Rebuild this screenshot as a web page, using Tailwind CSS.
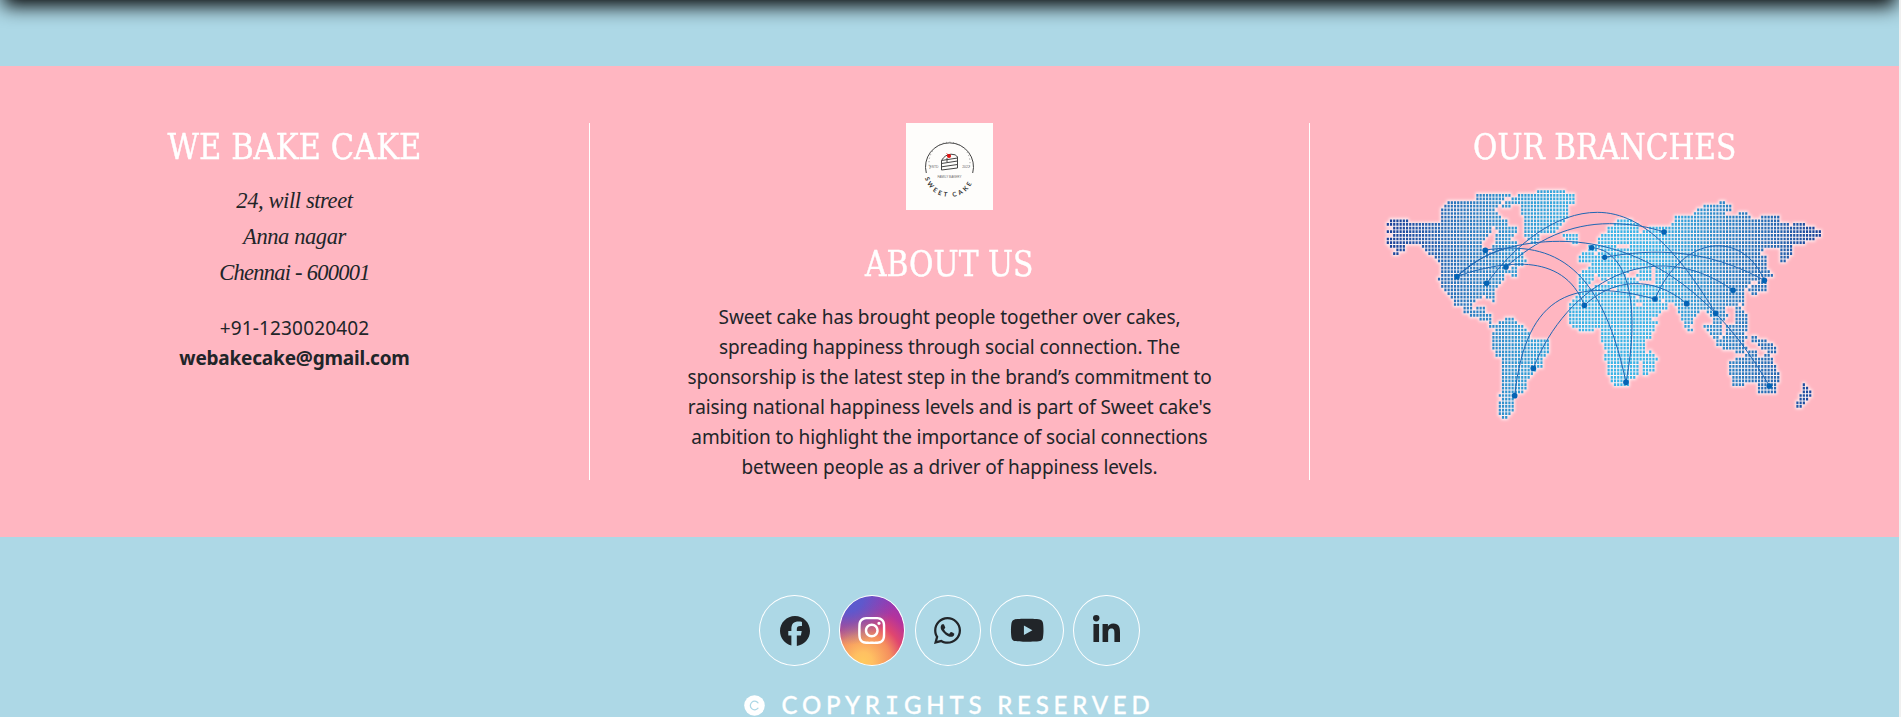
<!DOCTYPE html>
<html lang="en">
<head>
<meta charset="utf-8">
<title>We Bake Cake</title>
<script src="https://cdn.jsdelivr.net/npm/@tailwindcss/browser@4"></script>
</head>
<body class="bg-[#f0f0f0] overflow-hidden">
<div class="w-[1899px] h-[717px] bg-[#add8e6] overflow-hidden flex flex-col text-[#212529] font-['Noto_Sans',sans-serif]">
  <div class="h-[66px] shrink-0 overflow-hidden px-[3px]">
    <div class="h-[100px] -mt-[94px] bg-black blur-[9.5px]"></div>
  </div>

  <footer class="h-[471px] shrink-0 bg-[#ffb6c1] py-[57px] flex text-center">
    <section class="w-[590px] border-r border-white">
      <h2 class="h-[47px] leading-[48px] text-[35.5px] scale-x-[0.958] [-webkit-text-stroke:0.4px_white] text-white whitespace-nowrap font-['DejaVu_Serif_Condensed','DejaVu_Serif',serif] [font-stretch:semi-condensed]">WE BAKE CAKE</h2>
      <address class="mt-[13px] leading-9 text-[22.5px] font-['Liberation_Serif',serif] italic">
        <div class="tracking-[-0.4px]">24, will street</div>
        <div class="tracking-[-0.4px]">Anna nagar</div>
        <div class="tracking-[-0.75px]">Chennai - 600001</div>
      </address>
      <div class="mt-[22px] leading-[30px] text-[19px]">
        <div class="tracking-[0.15px]">+91-1230020402</div>
        <div class="font-bold tracking-[-0.2px]">webakecake@gmail.com</div>
      </div>
    </section>

    <section class="w-[720px] border-r border-white flex flex-col items-center">
      <svg class="w-[87px] h-[87px] shrink-0 bg-[#fefdfb]" viewBox="0 0 87 87">
        <g fill="none" stroke="#444">
          <path d="M20.3 50A24 24 0 1 1 66.700 50" stroke-width="1"/>
          <path d="M24 46A20.500 20.500 0 1 1 63 46" stroke-width=".9" stroke-dasharray=".9 2.6" stroke="#777"/>
          <path d="M35.500 37.500v9.500L51.500 45v-11.500M35.500 37.500L51.500 35M35.500 40.500L51.500 38M35.500 43.800L51.500 41.500M35.500 37.500Q39 31.500 45 31.200Q50 31 51.500 34" stroke-width="1"/>
          <path d="M41 35v4" stroke-width="1"/>
        </g>
        <circle cx="43" cy="33" r="2.100" fill="#e01010"/>
        <path d="M40.500 30.500l2 1.500" stroke="#e01010" stroke-width=".7"/>
        <g font-family="Liberation Sans, sans-serif" fill="#666" text-anchor="middle">
          <text x="28" y="45.200" font-size="3.400">ESTD</text>
          <text x="60" y="45.200" font-size="3.400">2022</text>
          <text x="43.500" y="54.500" font-size="3" textLength="24">FAMILY BAKERY</text>
        </g>
        <path id="ring" d="M18.500 53.500A25.500 25.500 0 0 0 68.500 53.500" fill="none"/>
        <text font-family="Lato, sans-serif" font-size="6.300" font-weight="700" fill="#333" letter-spacing="2.400"><textPath href="#ring" startOffset="1.500">SWEET CAKE</textPath></text>
      </svg>
      <h2 class="mt-[30px] h-[46px] shrink-0 leading-[47px] text-[35.5px] scale-x-[0.933] [-webkit-text-stroke:0.4px_white] text-white whitespace-nowrap font-['DejaVu_Serif_Condensed','DejaVu_Serif',serif] [font-stretch:semi-condensed]">ABOUT US</h2>
      <div class="mt-[16px] leading-[30px] text-[19px] tracking-[-0.09px] whitespace-nowrap">
        <div>Sweet cake has brought people together over cakes,</div>
        <div>spreading happiness through social connection. The</div>
        <div>sponsorship is the latest step in the brand’s commitment to</div>
        <div>raising national happiness levels and is part of Sweet cake's</div>
        <div>ambition to highlight the importance of social connections</div>
        <div>between people as a driver of happiness levels.</div>
      </div>
    </section>

    <section class="flex-1 flex flex-col items-center">
      <h2 class="h-[47px] shrink-0 leading-[48px] text-[35.5px] scale-x-[0.929] [-webkit-text-stroke:0.4px_white] text-white whitespace-nowrap font-['DejaVu_Serif_Condensed','DejaVu_Serif',serif] [font-stretch:semi-condensed]">OUR BRANCHES</h2>
      <svg class="mt-[10px] mr-[4px] w-[450px] h-[250px] shrink-0" viewBox="25 210 1350 750">
        <defs>
          <linearGradient id="sea" gradientUnits="userSpaceOnUse" x1="50" y1="0" x2="1350" y2="0">
            <stop offset="0" stop-color="#1a3f96"/><stop offset=".16" stop-color="#2c74bb"/><stop offset=".3" stop-color="#3298d2"/>
            <stop offset=".46" stop-color="#3cb4e6"/><stop offset=".62" stop-color="#3cb4e6"/><stop offset=".78" stop-color="#2f85c6"/><stop offset=".9" stop-color="#2767b0"/><stop offset="1" stop-color="#1a3f96"/>
          </linearGradient>
          <filter id="soft" x="-5%" y="-5%" width="110%" height="110%"><feGaussianBlur stdDeviation="5"/></filter>
        </defs>
        <path id="halo" fill="none" stroke="#fff" stroke-width="15" stroke-opacity=".85" filter="url(#soft)"/>
        <path id="dots" fill="none" stroke="url(#sea)" stroke-width="8.200" stroke-linecap="butt"/>
        <g fill="none" stroke="#1f66b3" stroke-width="3">
          <path d="M351 520C440 400 560 307 683 307C830 307 940 450 1038 610"/>
          <path d="M262 499C340 420 460 394 570 394C770 394 1010 500 1199 828"/>
          <path d="M409 471C500 390 600 341 720 341C790 341 840 352 883 366"/>
          <path d="M347 420C530 395 690 440 769 817"/>
          <path d="M262 499C390 455 580 420 644 586"/>
          <path d="M262 499C310 460 350 430 400 418"/>
          <path d="M666 413C770 420 815 570 769 817"/>
          <path d="M705 442C850 415 1010 415 1184 511"/>
          <path d="M856 567C940 370 1120 360 1184 511"/>
          <path d="M491 775C590 520 850 370 1090 541"/>
          <path d="M435 857C470 540 620 505 856 567"/>
          <path d="M644 586C730 505 850 495 951 581"/>
        </g>
        <g fill="#0563b4">
          <circle cx="347" cy="421" r="8.500"/><circle cx="262" cy="500" r="8.500"/><circle cx="351" cy="520" r="8.500"/><circle cx="409" cy="471" r="8.500"/>
          <circle cx="666" cy="413" r="8"/><circle cx="705" cy="442" r="8"/><circle cx="644" cy="586" r="8.500"/><circle cx="491" cy="775" r="8.500"/>
          <circle cx="435" cy="857" r="8.500"/><circle cx="769" cy="817" r="8.500"/><circle cx="883" cy="366" r="8.500"/><circle cx="856" cy="567" r="8.500"/>
          <circle cx="951" cy="581" r="8.500"/><circle cx="1038" cy="610" r="8.500"/><circle cx="1090" cy="541" r="8.500"/><circle cx="1184" cy="511" r="8.500"/><circle cx="1199" cy="828" r="8.500"/>
        </g>
      </svg>
    </section>
  </footer>

  <div class="h-[180px] shrink-0 pt-[58px] flex flex-col items-center">
    <div class="flex gap-[9.3px] h-[71px] shrink-0">
      <a class="w-[70.500px] rounded-[50%] border border-white flex items-center justify-center"><svg class="h-[30px] w-[30px]" viewBox="0 0 512 512" fill="currentColor"><path d="M512 256C512 114.600 397.400 0 256 0S0 114.600 0 256C0 376 82.700 476.800 194.200 504.500V334.200H141.400V256h52.800V222.300c0-87.100 39.400-127.500 125-127.500c16.200 0 44.200 3.200 55.700 6.400V172c-6-.6-16.500-1-29.600-1c-42 0-58.200 15.900-58.200 57.200V256h83.600l-14.400 78.200H287V510.100C413.800 494.800 512 386.900 512 256z"/></svg></a>
      <a class="w-[66.250px] rounded-[50%] border border-white flex items-center justify-center text-white bg-[radial-gradient(circle_at_12%_0%,#555dd2_0%,#5f58cc_18%,#5f58cc00_55%),radial-gradient(circle_at_36%_95%,#ffc95f_0%,#ffc062_12%,#f58f5e_36%,#e0466f_52%,#b5339b_70%,#8b38bd_95%)]"><svg class="h-[31px] w-[27.500px]" viewBox="0 0 448 512" fill="currentColor"><path d="M224.100 141c-63.600 0-114.900 51.300-114.900 114.900s51.300 114.900 114.900 114.900S339 319.500 339 255.900 287.700 141 224.100 141zm0 189.600c-41.100 0-74.700-33.500-74.700-74.700s33.500-74.700 74.700-74.700 74.700 33.500 74.700 74.700-33.600 74.700-74.700 74.700zm146.400-194.300c0 14.900-12 26.800-26.800 26.800-14.900 0-26.800-12-26.800-26.800s12-26.800 26.800-26.800 26.800 12 26.800 26.800zm76.100 27.200c-1.700-35.900-9.900-67.700-36.200-93.900-26.200-26.200-58-34.400-93.900-36.200-37-2.100-147.900-2.100-184.900 0-35.800 1.700-67.600 9.900-93.900 36.100s-34.400 58-36.200 93.900c-2.100 37-2.100 147.900 0 184.900 1.700 35.900 9.900 67.700 36.200 93.900s58 34.400 93.900 36.200c37 2.100 147.900 2.100 184.900 0 35.900-1.700 67.700-9.900 93.900-36.200 26.200-26.200 34.400-58 36.200-93.900 2.100-37 2.100-147.800 0-184.800zM398.800 388c-7.800 19.600-22.900 34.700-42.600 42.600-29.500 11.700-99.500 9-132.100 9s-102.700 2.600-132.100-9c-19.600-7.800-34.700-22.900-42.600-42.600-11.700-29.500-9-99.500-9-132.100s-2.600-102.700 9-132.100c7.800-19.600 22.900-34.700 42.600-42.600 29.500-11.700 99.500-9 132.100-9s102.700-2.600 132.100 9c19.600 7.800 34.700 22.900 42.600 42.600 11.700 29.500 9 99.500 9 132.100s2.700 102.700-9 132.100z"/></svg></a>
      <a class="w-[66.250px] rounded-[50%] border border-white flex items-center justify-center"><svg class="h-[31px] w-[27px]" viewBox="0 0 448 512" fill="currentColor"><path d="M380.900 97.100C339 55.100 283.200 32 223.900 32c-122.400 0-222 99.600-222 222 0 39.100 10.200 77.300 29.600 111L0 480l117.700-30.900c32.400 17.700 68.900 27 106.100 27h.1c122.300 0 224.100-99.600 224.100-222 0-59.300-25.200-115-67.100-157zm-157 341.600c-33.200 0-65.700-8.900-94-25.700l-6.700-4-69.800 18.300L72 359.200l-4.400-7c-18.500-29.400-28.200-63.300-28.200-98.200 0-101.700 82.800-184.500 184.600-184.500 49.300 0 95.600 19.200 130.400 54.100 34.800 34.900 56.200 81.200 56.100 130.500 0 101.800-84.900 184.600-186.600 184.600zm101.200-138.200c-5.500-2.800-32.800-16.200-37.900-18-5.100-1.900-8.800-2.800-12.500 2.800-3.700 5.600-14.300 18-17.600 21.800-3.200 3.700-6.500 4.200-12 1.400-32.600-16.300-54-29.100-75.500-66-5.700-9.800 5.700-9.100 16.300-30.300 1.800-3.700.9-6.900-.5-9.700-1.400-2.800-12.500-30.100-17.100-41.200-4.500-10.800-9.100-9.300-12.500-9.500-3.200-.2-6.900-.2-10.600-.2-3.700 0-9.700 1.400-14.800 6.900-5.100 5.600-19.400 19-19.400 46.300 0 27.300 19.900 53.700 22.600 57.400 2.800 3.700 39.100 59.700 94.800 83.800 35.200 15.200 49 16.500 66.600 13.900 10.700-1.600 32.800-13.400 37.400-26.400 4.600-13 4.600-24.100 3.200-26.400-1.300-2.500-5-3.900-10.500-6.600z"/></svg></a>
      <a class="w-[74px] rounded-[50%] border border-white flex items-center justify-center"><svg class="h-[30.500px] w-[34.500px]" viewBox="0 0 576 512" fill="currentColor"><path d="M549.655 124.083c-6.281-23.650-24.787-42.276-48.284-48.597C458.781 64 288 64 288 64S117.220 64 74.629 75.486c-23.497 6.322-42.003 24.947-48.284 48.597-11.412 42.867-11.412 132.305-11.412 132.305s0 89.438 11.412 132.305c6.281 23.650 24.787 41.500 48.284 47.821C117.220 448 288 448 288 448s170.780 0 213.371-11.486c23.497-6.321 42.003-24.171 48.284-47.821 11.412-42.867 11.412-132.305 11.412-132.305s0-89.438-11.412-132.305zm-317.510 213.508V175.185l142.739 81.205-142.739 81.201z"/></svg></a>
      <a class="w-[66.250px] rounded-[50%] border border-white flex items-center justify-center"><svg class="h-[31px] w-[27px]" viewBox="0 0 448 512" fill="currentColor"><path d="M100.280 448H7.400V148.900h92.880zM53.790 108.100C24.090 108.100 0 83.500 0 53.800a53.790 53.790 0 0 1 107.580 0c0 29.700-24.100 54.300-53.790 54.300zM447.900 448h-92.680V302.400c0-34.700-.7-79.200-48.290-79.200-48.290 0-55.690 37.700-55.690 76.700V448h-92.780V148.900h89.080v40.800h1.300c12.400-23.500 42.690-48.300 87.880-48.300 94 0 111.280 61.900 111.280 142.300V448z"/></svg></a>
    </div>
    <div class="mt-[28px] h-[22px] shrink-0 flex items-center text-white whitespace-nowrap">
      <svg class="w-[21px] h-[21px] mr-[16px]" viewBox="0 0 21 21"><circle cx="10.500" cy="10.500" r="10.300" fill="#fff"/><path d="M14 7.800A4.300 4.300 0 1 0 14 13.200" fill="none" stroke="#add8e6" stroke-width="1.300" stroke-linecap="round"/></svg>
      <span class="font-['Lato',sans-serif] text-[24px] leading-[22px] font-medium tracking-[4.8px] [-webkit-text-stroke:0.3px_white]">COPYR<span class="font-['DejaVu_Sans_Mono',monospace]">I</span>GHTS RESERVED</span>
    </div>
  </div>
</div>

<script>
// Land areas of the dotted world map: one string per grid row, each holding start-end runs.
const land = [
"505-585",
"322-420 447-612",
"322-400 428-612",
"235-390 408-612 1056-1060",
"225-380 400-420 457-595 1008-1080",
"216-370 457-595 990-1080",
"216-380 457-595 972-1062 1115-1130",
"216-390 466-590 922-1135 1182-1225",
"63-112 216-410 466-585 750-785 922-1225",
"54-410 466-575 735-800 912-1250 1270-1300",
"72-365 385-440 466-560 718-805 840-1330",
"54-365 395-440 466-550 718-805 825-1350",
"72-355 380-430 470-510 585-625 700-1350",
"54-345 380-420 475-510 590-625 690-735 750-1330",
"54-330 380-440 490-500 610-625 690-735 750-1300",
"63-105 160-330 370-440 660-680 690-735 785-1235 1245-1262",
"82-105 170-345 370-450 660-675 700-1180 1240-1262",
"72-85 180-455 640-670 690-1170 1240-1262",
"196-460 635-670 680-1185 1240-1255",
"206-470 635-670 680-1185 1240-1244",
"216-420 440-460 670-1185",
"216-410 430-440 655-840 860-1185",
"216-440 640-770 815-840 860-1175 1182-1195",
"216-400 430-440 635-665 690-765 800-845 860-1175 1185-1205",
"206-400 635-665 700-710 730-790 815-845 865-1170",
"216-390 635-660 715-725 735-800 860-1140 1170-1190",
"216-385 635-650 675-735 745-1130 1145-1190",
"225-375 635-720 750-1120 1140-1190",
"235-375 630-800 808-1120 1145-1155",
"245-330 350-375 620-795 812-1120",
"255-310 370-374 612-800 812-870 890-1110 1116-1120",
"255-300 605-795 820-885 922-1100 1116-1120",
"283-300 325-345 605-800 810-885 930-1065 1105-1115",
"283-345 605-815 825-875 930-990 1015-1065 1105-1120",
"302-365 605-820 830-865 940-975 1025-1070 1105-1125",
"330-365 410-425 605-840 940-965 1030-1065 1105-1125",
"362-366 390-440 605-860 950-965 1030-1050 1105-1125",
"360-455 612-855 950-955 1008-1055 1070-1090 1105-1125",
"380-470 630-665 695-850 960-965 1010-1050 1075-1125",
"370-480 700-845 1020-1050 1070-1120",
"370-480 700-840 1030-1040 1065-1100 1115-1130 1145-1155",
"370-535 700-825 1040-1120 1145-1190",
"370-535 708-820 1040-1120 1165-1205",
"370-535 708-820 1060-1120 1125-1130 1180-1215",
"380-530 717-820 838-842 1105-1120 1140-1160 1200-1215",
"385-525 710-820 835-855 1130-1160 1185-1195",
"400-520 710-820 830-860 1105-1170 1180-1205",
"400-520 717-800 825-855 1078-1205",
"400-515 720-805 825-850 1078-1215",
"400-495 720-805 825-850 1078-1220",
"400-490 720-805 825-830 1078-1225",
"400-480 730-790 1087-1225",
"400-470 730-775 1087-1225",
"400-470 740-775 1087-1120 1170-1215 1298-1302",
"400-465 1172-1215 1300-1310",
"400-455 1172-1215 1298-1320",
"390-400 410-435 1290-1320",
"400-430 1290-1310",
"390-430 1280-1300",
"390-430 1280-1290",
"390-425",
"390-420",
"400-410"
];
const pitchX = 9.6, pitchY = 10.92, x0 = 54.5, y0 = 245;
let dots = "", halo = "";
land.forEach((row, r) => {
  const y = (y0 + r * pitchY).toFixed(1);
  row.split(" ").forEach(run => {
    const [a, b] = run.split("-").map(Number);
    const first = Math.round((a - x0) / pitchX), last = Math.round((b - x0) / pitchX);
    for (let c = first; c <= last; c++) dots += `M${(x0 + c * pitchX - 3.3).toFixed(1)} ${y}h6.600`;
    halo += `M${(x0 + first * pitchX - 6).toFixed(1)} ${y}H${(x0 + last * pitchX + 6).toFixed(1)}`;
  });
});
document.getElementById("dots").setAttribute("d", dots);
document.getElementById("halo").setAttribute("d", halo);
</script>
</body>
</html>
